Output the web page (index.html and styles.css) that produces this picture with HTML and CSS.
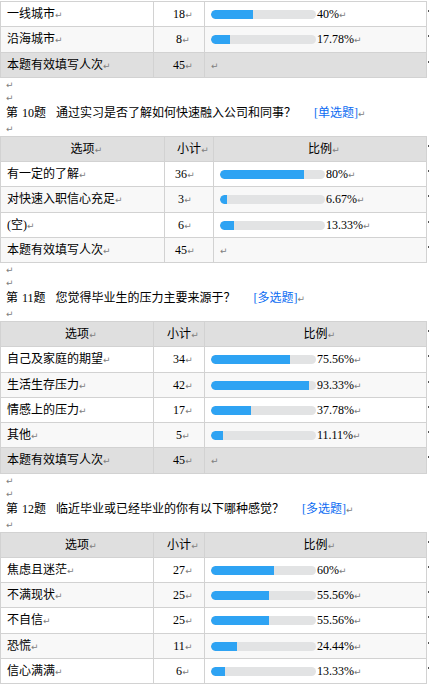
FILE: index.html
```html
<!DOCTYPE html>
<html lang="zh">
<head>
<meta charset="utf-8">
<link rel="stylesheet" href="styles.css">
</head>
<body>
<table class="tbl std">
<colgroup><col class="c1"><col class="c2"><col class="c3"></colgroup>
<tbody>
<tr><td>一线城市<span class="pm">↵</span></td><td class="num">18<span class="pm">↵</span></td><td class="ratio"><span class="bar"><span class="fill" style="width:40%"></span></span>40%<span class="pm">↵</span><span class="tick"></span></td></tr>
<tr><td>沿海城市<span class="pm">↵</span></td><td class="num">8<span class="pm">↵</span></td><td class="ratio"><span class="bar"><span class="fill" style="width:17.78%"></span></span>17.78%<span class="pm">↵</span><span class="tick"></span></td></tr>
<tr class="total"><td>本题有效填写人次<span class="pm">↵</span></td><td class="num">45<span class="pm">↵</span></td><td class="ratio"><span class="pm">↵</span><span class="tick"></span></td></tr>
</tbody>
</table>
<p class="blank"><span class="pm">↵</span></p>
<p class="blank"><span class="pm">↵</span></p>
<p class="title"><span class="qn">第<span class="n">10</span>题</span>通过实习是否了解如何快速融入公司和同事？<span class="type">[单选题]</span><span class="pm">↵</span></p>
<p class="blank last"><span class="pm">↵</span></p>
<table class="tbl alt">
<colgroup><col class="c1"><col class="c2"><col class="c3"></colgroup>
<thead>
<tr><th>选项<span class="pm">↵</span></th><th>小计<span class="pm">↵</span></th><th>比例<span class="pm">↵</span><span class="tick"></span></th></tr>
</thead>
<tbody>
<tr><td>有一定的了解<span class="pm">↵</span></td><td class="num">36<span class="pm">↵</span></td><td class="ratio"><span class="bar"><span class="fill" style="width:80%"></span></span>80%<span class="pm">↵</span><span class="tick"></span></td></tr>
<tr><td>对快速入职信心充足<span class="pm">↵</span></td><td class="num">3<span class="pm">↵</span></td><td class="ratio"><span class="bar"><span class="fill" style="width:6.67%"></span></span>6.67%<span class="pm">↵</span><span class="tick"></span></td></tr>
<tr><td>(空)<span class="pm">↵</span></td><td class="num">6<span class="pm">↵</span></td><td class="ratio"><span class="bar"><span class="fill" style="width:13.33%"></span></span>13.33%<span class="pm">↵</span><span class="tick"></span></td></tr>
<tr class="total"><td>本题有效填写人次<span class="pm">↵</span></td><td class="num">45<span class="pm">↵</span></td><td class="ratio"><span class="pm">↵</span><span class="tick"></span></td></tr>
</tbody>
</table>
<p class="blank"><span class="pm">↵</span></p>
<p class="blank"><span class="pm">↵</span></p>
<p class="title"><span class="qn">第<span class="n">11</span>题</span>您觉得毕业生的压力主要来源于？<span class="type">[多选题]</span><span class="pm">↵</span></p>
<p class="blank last"><span class="pm">↵</span></p>
<table class="tbl std">
<colgroup><col class="c1"><col class="c2"><col class="c3"></colgroup>
<thead>
<tr><th>选项<span class="pm">↵</span></th><th>小计<span class="pm">↵</span></th><th>比例<span class="pm">↵</span><span class="tick"></span></th></tr>
</thead>
<tbody>
<tr><td>自己及家庭的期望<span class="pm">↵</span></td><td class="num">34<span class="pm">↵</span></td><td class="ratio"><span class="bar"><span class="fill" style="width:75.56%"></span></span>75.56%<span class="pm">↵</span><span class="tick"></span></td></tr>
<tr><td>生活生存压力<span class="pm">↵</span></td><td class="num">42<span class="pm">↵</span></td><td class="ratio"><span class="bar"><span class="fill" style="width:93.33%"></span></span>93.33%<span class="pm">↵</span><span class="tick"></span></td></tr>
<tr><td>情感上的压力<span class="pm">↵</span></td><td class="num">17<span class="pm">↵</span></td><td class="ratio"><span class="bar"><span class="fill" style="width:37.78%"></span></span>37.78%<span class="pm">↵</span><span class="tick"></span></td></tr>
<tr><td>其他<span class="pm">↵</span></td><td class="num">5<span class="pm">↵</span></td><td class="ratio"><span class="bar"><span class="fill" style="width:11.11%"></span></span>11.11%<span class="pm">↵</span><span class="tick"></span></td></tr>
<tr class="total"><td>本题有效填写人次<span class="pm">↵</span></td><td class="num">45<span class="pm">↵</span></td><td class="ratio"><span class="pm">↵</span><span class="tick"></span></td></tr>
</tbody>
</table>
<p class="blank"><span class="pm">↵</span></p>
<p class="blank"><span class="pm">↵</span></p>
<p class="title"><span class="qn">第<span class="n">12</span>题</span>临近毕业或已经毕业的你有以下哪种感觉？<span class="type">[多选题]</span><span class="pm">↵</span></p>
<p class="blank last"><span class="pm">↵</span></p>
<table class="tbl std">
<colgroup><col class="c1"><col class="c2"><col class="c3"></colgroup>
<thead>
<tr><th>选项<span class="pm">↵</span></th><th>小计<span class="pm">↵</span></th><th>比例<span class="pm">↵</span><span class="tick"></span></th></tr>
</thead>
<tbody>
<tr><td>焦虑且迷茫<span class="pm">↵</span></td><td class="num">27<span class="pm">↵</span></td><td class="ratio"><span class="bar"><span class="fill" style="width:60%"></span></span>60%<span class="pm">↵</span><span class="tick"></span></td></tr>
<tr><td>不满现状<span class="pm">↵</span></td><td class="num">25<span class="pm">↵</span></td><td class="ratio"><span class="bar"><span class="fill" style="width:55.56%"></span></span>55.56%<span class="pm">↵</span><span class="tick"></span></td></tr>
<tr><td>不自信<span class="pm">↵</span></td><td class="num">25<span class="pm">↵</span></td><td class="ratio"><span class="bar"><span class="fill" style="width:55.56%"></span></span>55.56%<span class="pm">↵</span><span class="tick"></span></td></tr>
<tr><td>恐慌<span class="pm">↵</span></td><td class="num">11<span class="pm">↵</span></td><td class="ratio"><span class="bar"><span class="fill" style="width:24.44%"></span></span>24.44%<span class="pm">↵</span><span class="tick"></span></td></tr>
<tr><td>信心满满<span class="pm">↵</span></td><td class="num">6<span class="pm">↵</span></td><td class="ratio"><span class="bar"><span class="fill" style="width:13.33%"></span></span>13.33%<span class="pm">↵</span><span class="tick"></span></td></tr>
</tbody>
</table>
</body>
</html>
```
FILE: styles.css
```css
html, body {
  margin: 0;
  padding: 0;
  background: #fff;
}
body {
  padding-top: 1px;
  font-family: "Liberation Serif", "Noto Sans CJK SC", sans-serif;
  font-size: 12px;
  color: #000;
  width: 429px;
  overflow: hidden;
}
.pm {
  font-family: "DejaVu Sans", sans-serif;
  font-size: 9px;
  color: #808080;
  display: inline-block;
  width: 8px;
  margin-right: -8px;
  line-height: 1;
}
.tbl {
  border-collapse: collapse;
  table-layout: fixed;
  width: 427px;
}
.tbl td, .tbl th {
  border: 1px solid #d2d2d2;
  height: 24.25px;
  padding: 0 6px;
  line-height: 14px;
  white-space: nowrap;
  position: relative;
  text-align: left;
  font-weight: normal;
}
.tbl th {
  text-align: center;
  background: #dfdfdf;
}
.tbl tbody tr:nth-child(even) td {
  background: #f8f8f8;
}
.tbl tr.total td {
  background: #dfdfdf;
}
.std .c1 { width: 153px; }
.std .c2 { width: 51px; }
.alt .c1 { width: 164px; }
.alt .c2 { width: 49px; }
.tbl td.num {
  text-align: center;
}
.alt td.num {
  padding-right: 22px;
}
.tbl td.ratio {
  padding-left: 6px;
}
.bar {
  display: inline-block;
  vertical-align: -1px;
  width: 105px;
  height: 9px;
  border-radius: 4.5px;
  background: #e2e3e4;
  overflow: hidden;
  margin-right: 1px;
}
.fill {
  display: block;
  height: 100%;
  background: #2ea3f3;
  border-radius: 4.5px 0 0 4.5px;
}
.tick {
  position: absolute;
  right: -3px;
  top: 8px;
  width: 1px;
  height: 2px;
  background: #555;
}
p {
  margin: 0;
  padding-left: 6px;
}
.blank {
  height: 13px;
  line-height: 13px;
}
.blank.last {
  height: 14px;
}
.title {
  height: 18px;
  line-height: 18px;
  white-space: nowrap;
}
.qn {
  margin-right: 10px;
}
.n {
  margin-left: 4px;
}
.type {
  color: #0c6cf2;
  margin-left: 18px;
}
```
